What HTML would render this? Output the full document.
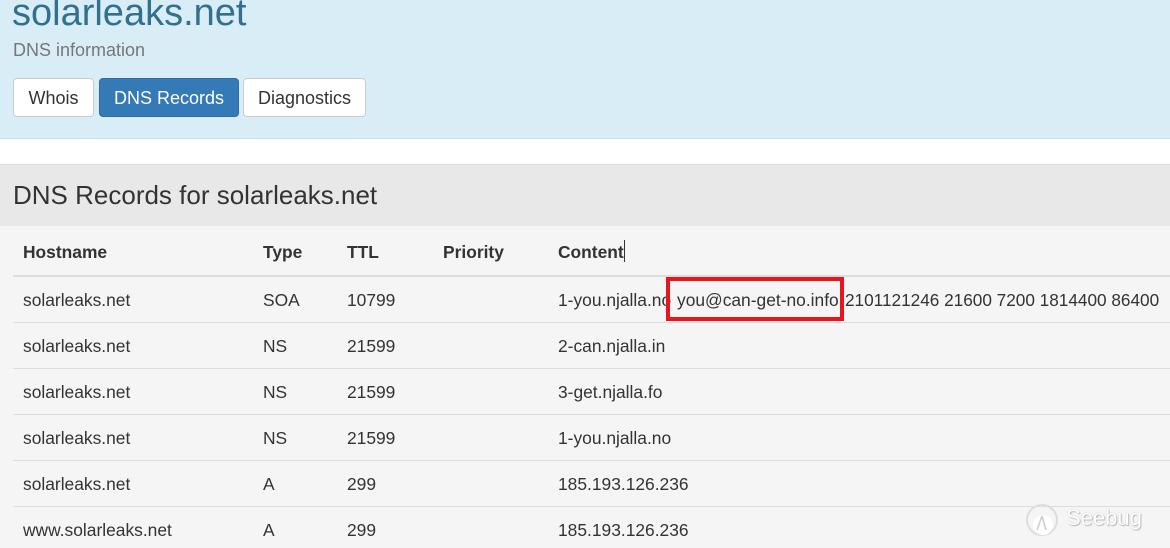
<!DOCTYPE html>
<html><head><style>
body{margin:0;width:1170px;height:548px;overflow:hidden;background:#f5f5f5;font-family:"Liberation Sans",Arial,sans-serif;position:relative}
.a{position:absolute;white-space:nowrap}
.hdr{position:absolute;left:0;top:0;width:1170px;height:138px;background:#d9edf7;border-bottom:1px solid #bce8f1}
.btn{position:absolute;top:78px;height:39px;border:1px solid #ccc;border-radius:4px;background:#fff;color:#333;font-size:18px;line-height:39px;text-align:center;box-sizing:border-box}
.td{position:absolute;font-size:17.4px;color:#333;white-space:nowrap}
.line{position:absolute;left:13px;width:1157px;height:1px;background:#ddd}
</style></head><body>
<div class="hdr"></div>
<div class="a" style="left:12px;top:-8px;font-size:38px;color:#31708f">solarleaks.net</div>
<div class="a" style="left:13px;top:40px;font-size:18px;color:#777">DNS information</div>
<div class="btn" style="left:13px;width:81px;">Whois</div>
<div class="btn" style="left:99px;width:140px;background:#337ab7;border-color:#2e6da4;color:#fff">DNS Records</div>
<div class="btn" style="left:243px;width:123px;">Diagnostics</div>
<div style="position:absolute;left:0;top:139px;width:1170px;height:25px;background:#fff"></div>
<div style="position:absolute;left:0;top:164px;width:1170px;height:1px;background:#ddd"></div>
<div style="position:absolute;left:0;top:165px;width:1170px;height:61px;background:#e8e8e8"></div>
<div class="a" style="left:13px;top:180px;font-size:26px;color:#333">DNS Records for solarleaks.net</div>
<div class="td" style="left:23px;top:242px;font-weight:bold">Hostname</div>
<div class="td" style="left:263px;top:242px;font-weight:bold">Type</div>
<div class="td" style="left:347px;top:242px;font-weight:bold">TTL</div>
<div class="td" style="left:443px;top:242px;font-weight:bold">Priority</div>
<div class="td" style="left:558px;top:242px;font-weight:bold">Content</div>
<div style="position:absolute;left:624px;top:240px;width:1px;height:22px;background:#333"></div>
<div class="line" style="top:275px;height:2px"></div>
<div class="td" style="left:23px;top:290px">solarleaks.net</div><div class="td" style="left:263px;top:290px">SOA</div><div class="td" style="left:347px;top:290px">10799</div>
<div class="td" style="left:558px;top:290px">1-you.njalla.no</div>
<div class="td" style="left:677px;top:290px">you@can-get-no.info</div>
<div class="td" style="left:845px;top:290px;font-size:17.2px">2101121246 21600 7200 1814400 86400</div>
<div style="position:absolute;left:666px;top:277px;width:178px;height:44px;border:4px solid #e8141e;box-sizing:border-box"></div>
<div class="line" style="top:322px"></div>
<div class="td" style="left:23px;top:336px">solarleaks.net</div><div class="td" style="left:263px;top:336px">NS</div><div class="td" style="left:347px;top:336px">21599</div><div class="td" style="left:558px;top:336px">2-can.njalla.in</div>
<div class="line" style="top:368px"></div>
<div class="td" style="left:23px;top:382px">solarleaks.net</div><div class="td" style="left:263px;top:382px">NS</div><div class="td" style="left:347px;top:382px">21599</div><div class="td" style="left:558px;top:382px">3-get.njalla.fo</div>
<div class="line" style="top:414px"></div>
<div class="td" style="left:23px;top:428px">solarleaks.net</div><div class="td" style="left:263px;top:428px">NS</div><div class="td" style="left:347px;top:428px">21599</div><div class="td" style="left:558px;top:428px">1-you.njalla.no</div>
<div class="line" style="top:460px"></div>
<div class="td" style="left:23px;top:474px">solarleaks.net</div><div class="td" style="left:263px;top:474px">A</div><div class="td" style="left:347px;top:474px">299</div><div class="td" style="left:558px;top:474px">185.193.126.236</div>
<div class="line" style="top:506px"></div>
<div class="td" style="left:23px;top:520px">www.solarleaks.net</div><div class="td" style="left:263px;top:520px">A</div><div class="td" style="left:347px;top:520px">299</div><div class="td" style="left:558px;top:520px">185.193.126.236</div>
<svg style="position:absolute;left:1024px;top:500px" width="40" height="40" viewBox="0 0 40 40"><circle cx="18" cy="20" r="15" fill="none" stroke="#ddd" stroke-width="2"/><circle cx="19" cy="25" r="10" fill="#fff"/><path d="M18 16 L13 30 M18 16 L22 30" stroke="#ccc" stroke-width="1.5" fill="none"/></svg>
<div class="a" style="left:1066px;top:505px;font-size:22px;color:#fff;text-shadow:0 0 1px #aaa,1px 1px 1px #bbb">Seebug</div>
</body></html>
